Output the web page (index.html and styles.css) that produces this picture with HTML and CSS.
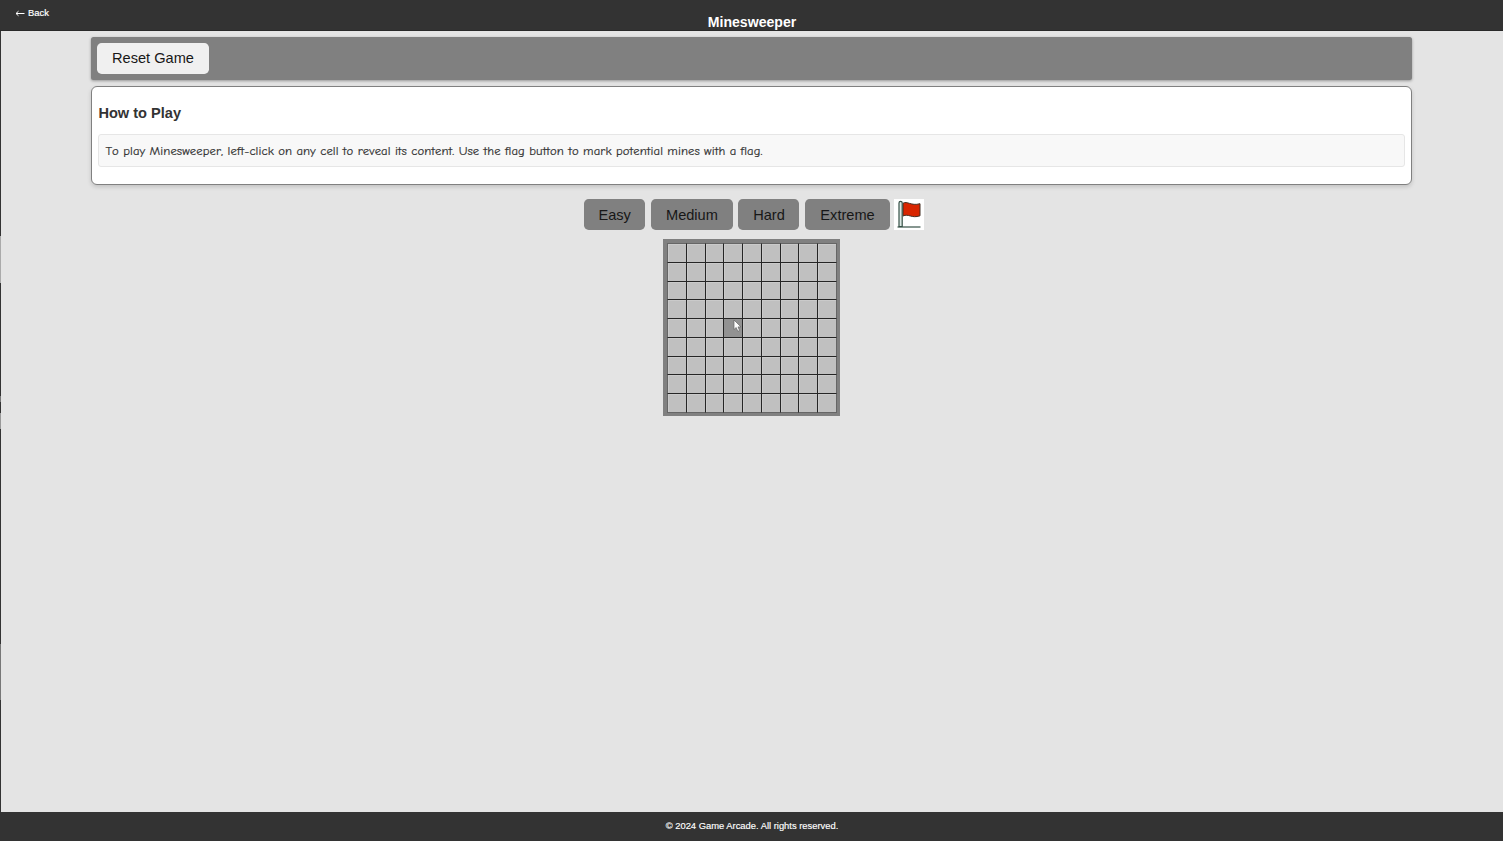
FILE: index.html
```html
<!DOCTYPE html>
<html lang="en">
<head>
<meta charset="utf-8">
<title>Minesweeper</title>
<link rel="stylesheet" href="styles.css">
</head>
<body>
<header class="header">
  <a class="back"><svg class="arrow" width="10" height="7" viewBox="0 0 10 7"><path d="M9.500 3.500H1M3.500 1.200L1 3.500L3.500 5.800" fill="none" stroke="#fff"/></svg>Back</a>
  <h1 class="title">Minesweeper</h1>
</header>
<main class="main">
  <nav class="toolbar"><button class="btn btn-light">Reset Game</button></nav>
  <section class="help">
    <h2 class="help-title">How to Play</h2>
    <p class="help-text"><span class="copy">To play Minesweeper, left-click on any cell to reveal its content. Use the flag button to mark potential mines with a flag.</span></p>
  </section>
  <div class="levels">
    <button class="btn easy">Easy</button>
    <button class="btn medium">Medium</button>
    <button class="btn hard">Hard</button>
    <button class="btn extreme">Extreme</button>
    <button class="flag" aria-label="Flag">
      <svg width="30" height="31" viewBox="0 0 30 31">
        <path d="M9 4.300C13 1.500 17 7.300 26 4.700V16.800C17.500 19.700 14.500 14.300 9 17Z" fill="#d82500" stroke="#453024" stroke-width="1"/>
        <path d="M5 4V27.500H8.200V4C8.200 1.700 5 1.700 5 4Z" fill="#dce9e5" stroke="#365047" stroke-width="1.200"/>
        <path d="M3.500 28H26.500" stroke="#365047" stroke-width="1.200"/>
      </svg>
    </button>
  </div>
  <div class="board" id="board"></div>
</main>
<footer class="footer">© 2024 Game Arcade. All rights reserved.</footer>
<div class="edge"></div>
<svg class="cursor" width="9" height="14" viewBox="0 0 9 14"><path d="M1 1V10.500L3.200 8.500L4.800 12.300L6.600 11.500L5 7.900H8Z" fill="#fff" stroke="#666" stroke-width=".7"/></svg>
<script src="board.js"></script>
</body>
</html>
```
FILE: styles.css
```css
* { box-sizing: border-box; }
body {
  margin: 0;
  height: 841px;
  overflow: hidden;
  display: flex;
  flex-direction: column;
  background: #e4e4e4;
  font-family: "Liberation Sans", Arial, sans-serif;
  color: #333;
}
.header {
  height: 31px;
  flex: none;
  display: grid;
  grid-template-columns: 1fr auto 1fr;
  padding: 0 15px;
  background: #333;
  border-bottom: 1px solid #292929;
  color: #fff;
}
.back { font-size: 9.4px; line-height: 11px; padding-top: 7px; white-space: nowrap; -webkit-text-stroke: .2px #fff; }
.arrow { margin-right: 3px; vertical-align: -1px; }
.title { margin: 0; padding: 13.500px 0 0 1px; font-size: 14.1px; line-height: 17px; font-weight: 700; }
.main {
  flex: 1;
  display: flex;
  flex-direction: column;
  align-items: center;
  padding: 6px 90.600px 0 91.400px;
}
.toolbar {
  width: 1321px;
  height: 43px;
  padding: 6px 5.600px;
  background: #808080;
  border-radius: 2.500px;
  box-shadow: 0 1px 3px rgba(0, 0, 0, .35);
}
.btn {
  display: flex;
  align-items: center;
  justify-content: center;
  height: 31px;
  padding: 0;
  border: 0;
  border-radius: 4.700px;
  background: #808080;
  color: #171717;
  font: 14.6px "Liberation Sans", Arial, sans-serif;
}
.btn-light { width: 112px; padding-bottom: 1px; background: #f0f0f0; }
.help {
  width: 1321px;
  height: 99px;
  margin-top: 6px;
  padding: 18px 6px 0;
  border: 1px solid #808080;
  border-radius: 6px;
  background: #fff;
  box-shadow: 0 2px 4px rgba(0, 0, 0, .15);
}
.help-title { margin: 0; font-size: 14.6px; line-height: 17px; }
.help-text {
  height: 33px;
  margin: 12px 0 0;
  padding: 0 6px;
  border: 1px solid #e6e6e6;
  border-radius: 3px;
  background: #f8f8f8;
  font: 12.7px/32px "Comic Sans MS", "Comic Neue", Lato, sans-serif;
  white-space: nowrap;
}
.copy { letter-spacing: .083px; font-variant-ligatures: none; font-kerning: none; -webkit-text-stroke: .2px #333; }
.levels { display: flex; gap: 5.8px; margin: 14.400px 0 0 3.700px; }
.easy { width: 61.5px; }
.medium { width: 81.5px; }
.hard { width: 61px; }
.extreme { width: 84.5px; }
.flag { width: 30px; height: 31px; margin-left: -2px; padding: 0; border: 0; background: #fff; }
.flag svg { display: block; }
.board {
  width: 177px;
  height: 177px;
  margin: 8.600px 0 0;
  padding: 4.250px 0 0 3.750px;
  background: #808080;
  display: grid;
  grid-template-columns: repeat(8, 18.75px) 19.5px;
  grid-template-rows: repeat(8, 18.75px) 19.5px;
}
.cell {
  border: solid #252525;
  border-width: 1px 0 0 1px;
  background: #c0c0c0;
  box-shadow: inset 1px 1px #cacaca;
}
.cell.last { border-right-width: 1px; border-right-color: #666; }
.cell.bottom { border-bottom-width: 1px; border-bottom-color: #666; }
.cell.first { border-left-color: #666; }
.cell.top { border-top-color: #666; }
.cell.active { background: #929292; box-shadow: none; }
.footer {
  flex: none;
  height: 29px;
  padding-left: 1px;
  background: #333;
  color: #fff;
  font-size: 9.4px;
  line-height: 28px;
  text-align: center;
  -webkit-text-stroke: .15px #fff;
}
.edge {
  position: absolute;
  left: 0;
  top: 31px;
  width: 1px;
  height: 781px;
  background: linear-gradient(#333 0 205px, #aaa 205px 252px, #333 252px 365px, #777 365px 371px, #333 371px 382px, #999 382px 398px, #333 398px 613px, #777 613px 669px, #333 669px);
}
.cursor { position: absolute; left: 733px; top: 319px; }
```
FILE: board.js
```js
const board = document.getElementById('board');
const size = 9;
for (let row = 0; row < size; row++) {
  for (let col = 0; col < size; col++) {
    const cell = document.createElement('div');
    cell.className = 'cell';
    if (row === 0) cell.classList.add('top');
    if (col === 0) cell.classList.add('first');
    if (row === size - 1) cell.classList.add('bottom');
    if (col === size - 1) cell.classList.add('last');
    if (row === 4 && col === 3) cell.classList.add('active');
    board.appendChild(cell);
  }
}
```
